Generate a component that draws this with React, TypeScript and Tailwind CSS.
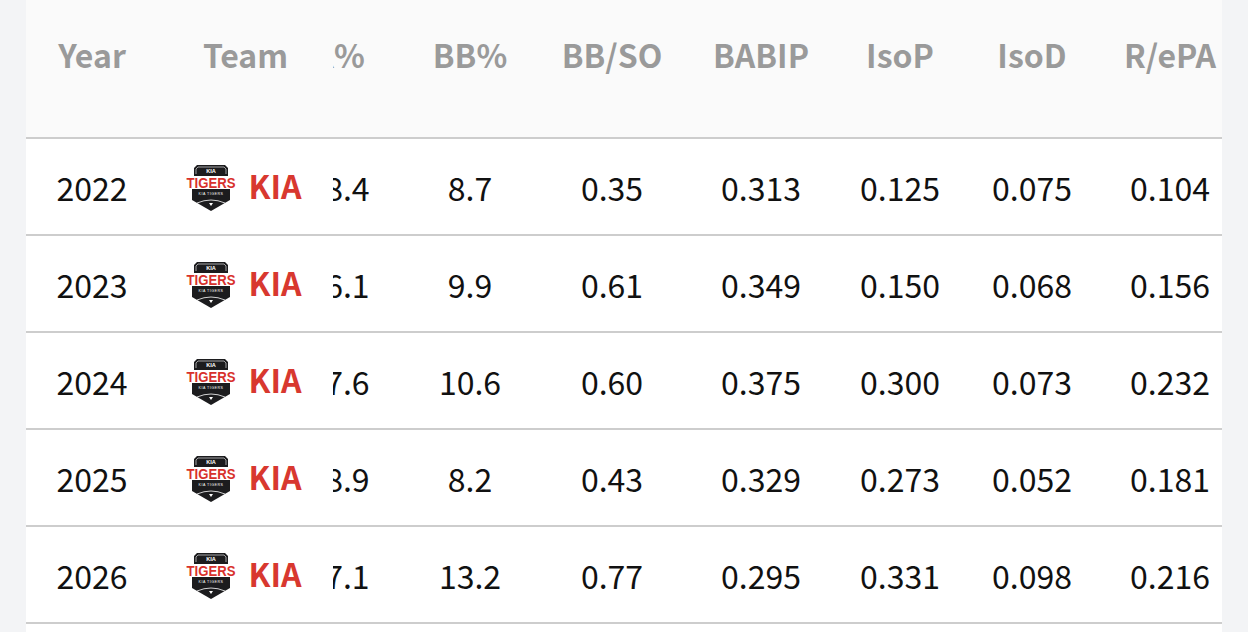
import React from "react";

type Row = {
  year: string;
  k: string;
  bb: string;
  bbso: string;
  babip: string;
  isop: string;
  isod: string;
  repa: string;
};

const ROWS: Row[] = [
  { year: "2022", k: "18.4", bb: "8.7", bbso: "0.35", babip: "0.313", isop: "0.125", isod: "0.075", repa: "0.104" },
  { year: "2023", k: "16.1", bb: "9.9", bbso: "0.61", babip: "0.349", isop: "0.150", isod: "0.068", repa: "0.156" },
  { year: "2024", k: "17.6", bb: "10.6", bbso: "0.60", babip: "0.375", isop: "0.300", isod: "0.073", repa: "0.232" },
  { year: "2025", k: "18.9", bb: "8.2", bbso: "0.43", babip: "0.329", isop: "0.273", isod: "0.052", repa: "0.181" },
  { year: "2026", k: "17.1", bb: "13.2", bbso: "0.77", babip: "0.295", isop: "0.331", isod: "0.098", repa: "0.216" },
];

// widths of the scrolled stat columns (first one is partly scrolled out of view)
const STAT_W = [
  "w-[134px] pr-[7px]",
  "w-[122px]",
  "w-[162px]",
  "w-[136px]",
  "w-[142px]",
  "w-[122px]",
  "w-[129px] pl-[25px]",
];

function TigersLogo() {
  return (
    <svg width="52" height="50" viewBox="0 0 52 50" overflow="visible" className="shrink-0">
      <path d="M9 14 V6 L12 3 H40 L43 6 V14 Z" fill="#1c1c1e" />
      <path d="M11 12 V7 L13 5 H39 L41 7 V12" fill="none" stroke="#ffffff" strokeWidth="0.6" />
      <text x="26" y="10.8" textAnchor="middle" fontSize="5.6" fontWeight="900" fill="#ffffff" fontFamily="'Liberation Sans', sans-serif">
        KIA
      </text>
      <path d="M7 27 H45 V38 L26 49 L7 38 Z" fill="#1c1c1e" />
      <text
        x="26"
        y="26"
        textAnchor="middle"
        fontSize="14.5"
        fontWeight="900"
        fill="#d8312c"
        stroke="#ffffff"
        strokeWidth="0.9"
        paintOrder="stroke"
        textLength="49"
        lengthAdjust="spacingAndGlyphs"
        fontFamily="'Liberation Sans', sans-serif"
      >
        TIGERS
      </text>
      <text x="26" y="33" textAnchor="middle" fontSize="3.6" fill="#ffffff" fontFamily="'Liberation Sans', sans-serif" letterSpacing="0.5">
        KIA TIGERS
      </text>
      <path d="M12 41 Q26 35 40 41" fill="none" stroke="#ffffff" strokeWidth="0.8" />
      <path d="M24 41 L26 44 L28 41 Z" fill="#ffffff" />
    </svg>
  );
}

function StatCells({ values, header }: { values: string[]; header?: boolean }) {
  return (
    <div className="flex-1 overflow-hidden">
      <div className="-ml-[58px] flex w-max">
        {values.map((v, i) => (
          <div key={i} className={`${STAT_W[i]} shrink-0 text-center ${header ? "font-bold text-[#9a9a9a]" : "text-[#111111]"}`}>
            {v}
          </div>
        ))}
      </div>
    </div>
  );
}

export default function App() {
  return (
    <div
      className="flex h-screen w-full bg-[#f3f4f6]"
      style={{ fontFamily: "'Noto Sans CJK KR', 'Noto Sans', sans-serif" }}
    >
      <div className="w-[26px] shrink-0" />
      <main className="flex-1 overflow-hidden bg-white text-[32px]">
        <div className="flex h-[137px] items-start bg-[#fafafa] pt-[30px] leading-[48px]">
          <div className="w-[132px] shrink-0 text-center font-bold text-[#9a9a9a]">Year</div>
          <div className="w-[175px] shrink-0 text-center font-bold text-[#9a9a9a]">Team</div>
          <StatCells header values={["K%", "BB%", "BB/SO", "BABIP", "IsoP", "IsoD", "R/ePA"]} />
        </div>
        <div className="h-[2px] bg-[#cdcdcd]" />
        {ROWS.map((r) => (
          <div key={r.year}>
            <div className="flex h-[95px] items-center leading-[48px]">
              <div className="w-[132px] shrink-0 text-center text-[#111111]">{r.year}</div>
              <div className="flex w-[175px] shrink-0 items-center justify-center gap-[11px] pr-[4px]">
                <TigersLogo />
                <span className="-mt-[4px] font-bold text-[#d8382f]">KIA</span>
              </div>
              <StatCells values={[r.k, r.bb, r.bbso, r.babip, r.isop, r.isod, r.repa]} />
            </div>
            <div className="h-[2px] bg-[#cdcdcd]" />
          </div>
        ))}
      </main>
      <div className="w-[26px] shrink-0" />
    </div>
  );
}
